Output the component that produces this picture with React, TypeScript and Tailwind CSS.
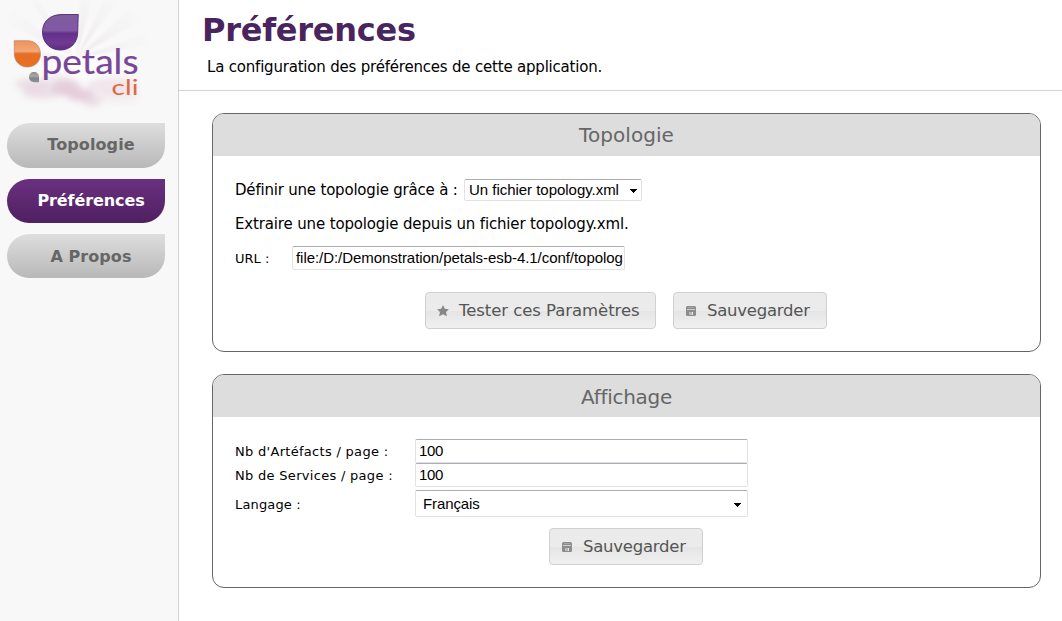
import React from 'react';

const verdana = "font-['DejaVu_Sans',Verdana,sans-serif]";
const arial = "font-['Liberation_Sans',Arial,sans-serif]";
const field =
  'border border-[#e0e3e6] border-t-[#abadb3] rounded-[2px] bg-white text-black outline-none';

function Logo() {
  return (
    <svg className="block h-[120px] w-[178px]" viewBox="0 0 178 120" role="img" aria-label="petals cli">
      <defs>
        <linearGradient id="violet" x1="0" y1="0" x2="0" y2="1">
          <stop offset="0" stopColor="#7f5c9f" />
          <stop offset="0.45" stopColor="#8058a3" />
          <stop offset="0.53" stopColor="#63308c" />
          <stop offset="0.8" stopColor="#713994" />
          <stop offset="1" stopColor="#5c2c80" />
        </linearGradient>
        <linearGradient id="orange" x1="0" y1="0" x2="0" y2="1">
          <stop offset="0" stopColor="#f0905a" />
          <stop offset="0.4" stopColor="#f2a878" />
          <stop offset="0.5" stopColor="#e66e26" />
          <stop offset="1" stopColor="#e8701f" />
        </linearGradient>
        <linearGradient id="grey" x1="0" y1="0" x2="0" y2="1">
          <stop offset="0" stopColor="#8b8f90" />
          <stop offset="0.4" stopColor="#a5a8a9" />
          <stop offset="0.6" stopColor="#808485" />
          <stop offset="1" stopColor="#8d9192" />
        </linearGradient>
        <radialGradient id="glow">
          <stop offset="0" stopColor="#ffffff" stopOpacity="0.9" />
          <stop offset="1" stopColor="#f8f8f8" stopOpacity="0" />
        </radialGradient>
        <radialGradient id="ray" gradientUnits="userSpaceOnUse" cx="76" cy="58" r="74">
          <stop offset="0.2" stopColor="#ece5e9" stopOpacity="0.7" />
          <stop offset="1" stopColor="#f1edef" stopOpacity="0.1" />
        </radialGradient>
        <filter id="soft" x="-30%" y="-30%" width="160%" height="160%">
          <feGaussianBlur stdDeviation="3" />
        </filter>
        <filter id="haze">
          <feGaussianBlur stdDeviation="1" />
        </filter>
      </defs>
      <ellipse cx="78" cy="60" rx="72" ry="58" fill="url(#glow)" />
      <g fill="url(#ray)" filter="url(#haze)">
        <path d="M76 58 5 22 13 10ZM76 58 28 0H38ZM76 58 80 0H92ZM76 58 104 0H118ZM76 58 130 9 142 20ZM76 58 146 34 148 45ZM76 58 8 48 8 57Z" />
      </g>
      <g filter="url(#soft)" fill="#e5cedb">
        <ellipse cx="32" cy="84" rx="17" ry="6" opacity="0.6" />
        <ellipse cx="42" cy="92" rx="20" ry="7" opacity="0.6" />
        <ellipse cx="66" cy="88" rx="15" ry="8" />
        <ellipse cx="80" cy="95" rx="14" ry="6" />
        <ellipse cx="92" cy="101" rx="10" ry="6" opacity="0.6" />
        <ellipse cx="112" cy="86" rx="26" ry="8" opacity="0.45" />
        <ellipse cx="58" cy="80" rx="14" ry="5" opacity="0.4" />
        <ellipse cx="118" cy="97" rx="22" ry="6" opacity="0.25" />
      </g>
      <path
        d="M78.300 14.500H62C50 14.500 42.500 21.500 42.500 32C42.500 42.500 50 50 60.500 50C71 50 77.500 42 77.700 33C77.900 27 78 20 78.300 14.500Z"
        fill="url(#violet)"
        stroke="#4f2a75"
        strokeWidth="0.9"
      />
      <path
        d="M14.200 40.700H27.500C35.500 40.700 40.400 46.500 40.400 54C40.400 61.500 35 67 27.500 67C20 67 14.400 61.500 14.400 54Z"
        fill="url(#orange)"
        stroke="#c08065"
        strokeWidth="0.7"
      />
      <path d="M39 82.200H34.500C31 82.200 29 80 29 77C29 74 31 72 34 72C37 72 39 74 39 77Z" fill="url(#grey)" />
      <text
        x="41.500"
        y="73.500"
        textLength="97"
        lengthAdjust="spacingAndGlyphs"
        fill="#774699"
        stroke="#774699"
        strokeWidth="0.2"
        fontSize="34"
        fontFamily="Lato, sans-serif"
      >
        petals
      </text>
      <text
        x="111.500"
        y="95.300"
        textLength="27"
        lengthAdjust="spacingAndGlyphs"
        fill="#e0683e"
        fontSize="22"
        fontFamily="Lato, sans-serif"
      >
        cli
      </text>
    </svg>
  );
}

function NavItem({ label, active = false, size }: { label: string; active?: boolean; size: string }) {
  const tone = active
    ? 'bg-linear-to-b from-[#6a3080] to-[#502061] text-white'
    : 'bg-linear-to-b from-[#dedede] to-[#b8b8b8] text-[#666]';
  return (
    <a
      href="#"
      className={`flex w-[158px] items-center justify-center rounded-tl-[22px] rounded-br-[22px] rounded-bl-[22px] pl-[10px] text-base font-bold ${size} ${tone}`}
    >
      {label}
    </a>
  );
}

function StarIcon() {
  return (
    <svg className="mt-px" width="12" height="12" viewBox="0 0 12 12" fill="#878787">
      <path d="M6 0 7.800 3.700 11.900 4.200 9 7.100 9.900 11.300 6 9.300 2.100 11.300 3 7.100 0.100 4.200 4.200 3.700Z" />
    </svg>
  );
}

function DiskIcon() {
  return (
    <svg className="mt-px" width="12" height="12" viewBox="0 0 12 12">
      <rect x="1" y="1" width="10" height="10" rx="1.500" fill="#8c8c8c" />
      <path d="M3 2H9V3H3Z" fill="#a5a5a5" />
      <path d="M2 4H10V5H2Z" fill="#cfcfcf" />
      <path d="M4 7H8V10H4Z" fill="#b9b9b9" />
      <path d="M7 7H8V10H7Z" fill="#e6e6e6" />
    </svg>
  );
}

function Button({ icon, label, width, tracking }: { icon: React.ReactNode; label: string; width: string; tracking: string }) {
  return (
    <button
      className={`flex h-[37px] items-center rounded-[4px] border border-[#d0d0d0] bg-[linear-gradient(#ebebeb_0%,#ebebeb_50%,#e5e5e5_52%,#f0f0f0_100%)] pl-[11px] text-[16.5px] text-[#555] ${width}`}
    >
      {icon}
      <span className={`mt-[2px] ml-[10px] whitespace-nowrap ${tracking}`}>{label}</span>
    </button>
  );
}

function Panel({ title, height, heading, children }: { title: string; height: string; heading: string; children: React.ReactNode }) {
  return (
    <section className={`w-[829px] overflow-hidden rounded-[12px] border border-[#666] bg-white ${height}`}>
      <h2 className={`flex h-[42px] items-center justify-center bg-[#ddd] text-xl text-[#666] ${heading}`}>
        {title}
      </h2>
      {children}
    </section>
  );
}

function Select({ value, className }: { value: string; className: string }) {
  return (
    <div role="combobox" className={`${field} ${arial} flex items-center justify-between whitespace-nowrap ${className}`}>
      <span>{value}</span>
      <svg className="mt-px" width="8" height="4" viewBox="0 0 8 4" shapeRendering="crispEdges">
        <path d="M0 0H8L4 4Z" fill="#000" />
      </svg>
    </div>
  );
}

export default function App() {
  return (
    <div className={`flex h-[621px] w-[1062px] overflow-hidden bg-white text-black ${verdana}`}>
      <aside className="w-[179px] shrink-0 border-r border-[#d2d2d2] bg-[#f8f8f8]">
        <Logo />
        <nav className="flex flex-col gap-[11px] pt-[3px] pl-[7px]">
          <NavItem label="Topologie" size="h-[45px] pb-px tracking-[0.1px]" />
          <NavItem label="Préférences" active size="h-[44px] tracking-[-0.1px]" />
          <NavItem label="A Propos" size="h-[44px] pt-px tracking-[0.05px]" />
        </nav>
      </aside>
      <main className="flex-1">
        <header className="h-[91px] border-b border-[#d2d2d2] pl-[23px]">
          <h1 className="pt-[10px] text-[32px] leading-[40px] font-bold text-[#4a245e]">
            <span className="tracking-[-0.25px]">Préférences</span>
          </h1>
          <p className="pt-[6px] pl-[5px] text-[15px] leading-[22px]">
            <span className="tracking-[-0.2px]">La configuration des préférences de cette application.</span>
          </p>
        </header>
        <div className="flex flex-col gap-[22px] pt-[22px] pl-[33px]">
          <Panel title="Topologie" height="h-[239px]" heading="tracking-[0.05px]">
            <div className="pl-[22px] text-[15px]">
              <div className="mt-[23px] flex h-[22px] items-center">
                <span className="w-[229px] whitespace-nowrap tracking-[-0.2px]">Définir une topologie grâce à :</span>
                <Select value="Un fichier topology.xml" className="h-[22px] w-[178px] pr-1 pl-1 text-[15px] tracking-[-0.03px]" />
              </div>
              <p className="mt-[12px] leading-[22px]">
                <span className="tracking-[-0.15px]">Extraire une topologie depuis un fichier topology.xml.</span>
              </p>
              <div className="mt-[11px] flex items-center">
                <label className="w-[57px] pt-px text-[13px]">URL :</label>
                <input
                  className={`${field} ${arial} h-[24px] w-[333px] pr-px pb-[2px] pl-[3px] text-[15px] tracking-[-0.05px]`}
                  defaultValue="file:/D:/Demonstration/petals-esb-4.1/conf/topolog"
                />
              </div>
            </div>
            <div className="mt-[22px] flex gap-[17px] pl-[212px]">
              <Button icon={<StarIcon />} label="Tester ces Paramètres" width="w-[231px]" tracking="tracking-[-0.06px]" />
              <Button icon={<DiskIcon />} label="Sauvegarder" width="w-[154px]" tracking="tracking-[-0.25px]" />
            </div>
          </Panel>
          <Panel title="Affichage" height="h-[214px]" heading="pt-px tracking-[-0.3px]">
            <div className="mt-[22px] flex flex-col pl-[22px] text-[13px]">
              <div className="flex items-center">
                <label className="w-[180px] pt-px"><span className="tracking-[0.3px]">Nb d'Artéfacts / page :</span></label>
                <input className={`${field} ${arial} h-[24px] w-[333px] px-[3px] pb-[2px] text-[15px] tracking-[-0.3px]`} defaultValue="100" />
              </div>
              <div className="flex items-center">
                <label className="w-[180px] pt-px"><span className="tracking-[0.3px]">Nb de Services / page :</span></label>
                <input className={`${field} ${arial} h-[24px] w-[333px] px-[3px] pb-[2px] text-[15px] tracking-[-0.3px]`} defaultValue="100" />
              </div>
              <div className="mt-[3px] flex items-center">
                <label className="w-[180px] pt-[2px]"><span className="tracking-[0.15px]">Langage :</span></label>
                <Select value="Français" className="h-[27px] w-[333px] pt-px pr-[6px] pl-[7px] text-[15px] tracking-[-0.1px]" />
              </div>
            </div>
            <div className="mt-[11px] pl-[336px]">
              <Button icon={<DiskIcon />} label="Sauvegarder" width="w-[154px]" tracking="tracking-[-0.25px]" />
            </div>
          </Panel>
        </div>
      </main>
    </div>
  );
}
